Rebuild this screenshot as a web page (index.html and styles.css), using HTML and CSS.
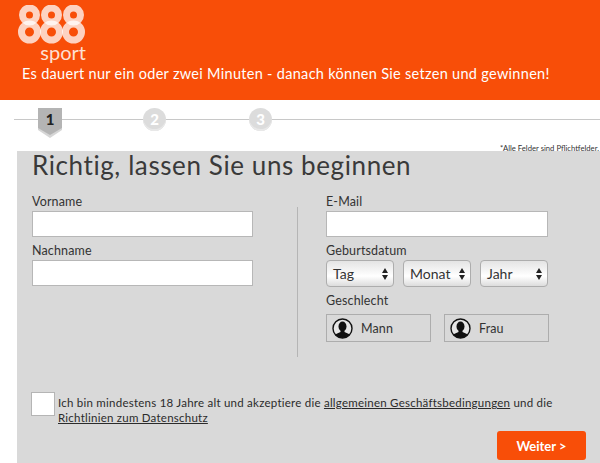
FILE: index.html
```html
<!DOCTYPE html>
<html lang="de">
<head>
<meta charset="utf-8">
<title>888sport</title>
<link rel="stylesheet" href="styles.css">
</head>
<body>
<header class="hero">
  <div class="logo">
    <svg class="logo-mark" width="68" height="39" viewBox="0 0 68 39" fill="none" stroke="#fff" stroke-opacity=".75" stroke-width="7">
      <circle cx="11.5" cy="10" r="7"/><circle cx="11.5" cy="27" r="8"/>
      <circle cx="33.5" cy="10" r="7"/><circle cx="33.5" cy="27" r="8"/>
      <circle cx="55.5" cy="10" r="7"/><circle cx="55.5" cy="27" r="8"/>
    </svg>
    <span class="logo-word">sport</span>
  </div>
  <p class="tagline">Es dauert nur ein oder zwei Minuten - danach können Sie setzen und gewinnen!</p>
</header>
<nav class="steps">
  <div class="step-active">
    <svg width="24" height="30" viewBox="0 0 24 30"><path d="M0 0H24V22L12 30L0 22Z" fill="#d6d6d6"/><path d="M0 0H24V20L12 27L0 20Z" fill="#b4b4b4"/></svg>
    <span class="step-num">1</span>
  </div>
  <span class="step-circle step-two">2</span>
  <span class="step-circle step-three">3</span>
</nav>
<p class="note">*Alle Felder sind Pflichtfelder.</p>
<main class="panel">
  <h1 class="title">Richtig, lassen Sie uns beginnen</h1>
  <div class="columns">
    <div class="col-left">
      <label class="label">Vorname</label>
      <input class="field" type="text">
      <label class="label label-next">Nachname</label>
      <input class="field" type="text">
    </div>
    <div class="divider"></div>
    <div class="col-right">
      <label class="label">E-Mail</label>
      <input class="field" type="text">
      <label class="label label-next">Geburtsdatum</label>
      <div class="selects">
        <div class="select">Tag<svg class="updown" width="6" height="12" viewBox="0 0 6 12"><path d="M3 0L6 5H0ZM3 12L0 7H6Z" fill="#222"/></svg></div>
        <div class="select">Monat<svg class="updown" width="6" height="12" viewBox="0 0 6 12"><path d="M3 0L6 5H0ZM3 12L0 7H6Z" fill="#222"/></svg></div>
        <div class="select">Jahr<svg class="updown" width="6" height="12" viewBox="0 0 6 12"><path d="M3 0L6 5H0ZM3 12L0 7H6Z" fill="#222"/></svg></div>
      </div>
      <label class="label label-gender">Geschlecht</label>
      <div class="genders">
        <div class="gender">
          <svg width="21" height="21" viewBox="0 0 21 21"><defs><clipPath id="c1"><circle cx="10.5" cy="10.5" r="9.5"/></clipPath></defs><circle cx="10.5" cy="10.5" r="9.5" fill="#e6e6e6"/><g clip-path="url(#c1)" fill="#111"><ellipse cx="10.5" cy="8.5" rx="4" ry="5"/><path d="M8.5 12.5H12.5V14L18 16.5V21H3V16.5L8.5 14Z"/></g><circle cx="10.5" cy="10.5" r="9.5" fill="none" stroke="#111" stroke-width="1.4"/></svg>
          <span>Mann</span>
        </div>
        <div class="gender">
          <svg width="21" height="21" viewBox="0 0 21 21"><defs><clipPath id="c2"><circle cx="10.5" cy="10.5" r="9.5"/></clipPath></defs><circle cx="10.5" cy="10.5" r="9.5" fill="#e6e6e6"/><g clip-path="url(#c2)" fill="#111"><ellipse cx="10.5" cy="8.5" rx="4" ry="5"/><path d="M8.5 12.5H12.5V14L18 16.5V21H3V16.5L8.5 14Z"/></g><circle cx="10.5" cy="10.5" r="9.5" fill="none" stroke="#111" stroke-width="1.4"/></svg>
          <span>Frau</span>
        </div>
      </div>
    </div>
  </div>
  <div class="terms">
    <span class="checkbox"></span>
    <p class="terms-text">Ich bin mindestens 18 Jahre alt und akzeptiere die <a href="#">allgemeinen Geschäftsbedingungen</a> und die <a href="#">Richtlinien zum Datenschutz</a></p>
  </div>
  <div class="actions"><button class="next" type="button">Weiter &gt;</button></div>
</main>
</body>
</html>
```
FILE: styles.css
```css
* { box-sizing: border-box; }
html, body { margin: 0; padding: 0; }
body {
  width: 600px;
  height: 463px;
  overflow: hidden;
  background: #fff;
  font-family: Lato, "Liberation Sans", sans-serif;
  color: #2b2b2b;
}
.hero {
  height: 100px;
  background: #f84e08;
  color: #fff;
  padding: 5px 0 0 18px;
}
.logo { width: 68px; display: flex; flex-direction: column; align-items: flex-end; }
.logo-mark { display: block; }
.logo-word { font-size: 20px; font-weight: 400; line-height: 17px; color: #fde0d2; }
.tagline { margin: 3px 0 0 4px; font-size: 14.5px; line-height: 20px; letter-spacing: .3px; white-space: nowrap; }
.steps {
  position: relative;
  height: 38px;
  margin: 8px 0 0 14px;
  background: linear-gradient(#c8c8c8, #c8c8c8) 0 11px / 100% 1px no-repeat;
  display: flex;
  align-items: flex-start;
}
.step-active { position: relative; width: 24px; height: 30px; margin-left: 24px; }
.step-active svg { display: block; }
.step-num { position: absolute; left: 0; right: 0; top: 1px; text-align: center; font-size: 15px; font-weight: 900; line-height: 20px; color: #222; }
.step-circle {
  width: 23px; height: 23px; border-radius: 50%;
  background: #dcdcdc; color: #fff;
  box-shadow: inset 0 -2px 0 #e8e8e8;
  font-size: 15px; font-weight: 900; line-height: 23px; text-align: center;
}
.step-two { margin-left: 81px; }
.step-three { margin-left: 83px; }
.note { margin: -2px 1px 0 0; font-size: 7.7px; line-height: 8px; text-align: right; color: #333; }
.panel {
  margin: -1px 0 0 17px;
  height: 312px;
  background: #d9d9d9;
  padding: 0 0 0 15px;
}
.title { margin: 0; font-size: 26px; font-weight: 400; line-height: 28px; letter-spacing: .6px; color: #3a3a3a; }
.columns { display: flex; margin-top: 15px; height: 158px; }
.col-left { width: 221px; }
.divider { width: 1px; height: 150px; margin: 13px 0 0 44px; background: #b5b5b5; }
.col-right { margin-left: 28px; width: 223px; }
.label { display: block; font-size: 12.5px; line-height: 16px; letter-spacing: .15px; color: #333; height: 16px; }
.label-next { margin-top: 6px; }
.label-gender { margin-top: 6px; }
.field {
  display: block;
  width: 100%;
  height: 26px;
  margin: 1px 0 0;
  border: 1px solid #b7b7b7;
  background: #fff;
  padding: 0;
}
.col-right .field { width: 222px; }
.selects { display: flex; gap: 9px; margin-top: 1px; width: 222px; }
.select {
  flex: 1;
  height: 27px;
  border: 1px solid #adadad;
  border-radius: 4px;
  background: linear-gradient(#e4e4e4, #f8f8f8 45%, #ffffff 60%, #dcdcdc);
  padding: 0 5px 0 6px;
  display: flex;
  align-items: center;
  justify-content: space-between;
  font-size: 14px;
  color: #333;
}
.genders { display: flex; gap: 13px; margin-top: 5px; }
.gender {
  width: 105px;
  height: 28px;
  border: 1px solid #adadad;
  display: flex;
  align-items: center;
  gap: 8px;
  padding-left: 5px;
  font-size: 12.5px;
  letter-spacing: .1px;
  color: #333;
}
.terms { display: flex; margin: 40px 0 0 -1px; align-items: flex-start; gap: 3px; }
.checkbox { width: 24px; height: 24px; flex: none; background: #fff; border: 1px solid #b5b5b5; }
.terms-text { margin: 3px 0 0; width: 510px; font-size: 11.5px; line-height: 15px; letter-spacing: .24px; color: #2b2b2b; }
.terms-text a { color: #2b2b2b; text-decoration: underline; }
.actions { display: flex; justify-content: flex-end; margin: 0 14px 0 0; }
.next {
  width: 89px; height: 29px;
  margin-top: 6px;
  border: 0; border-radius: 3px;
  background: #f84e08; color: #fff;
  font: 700 13px Lato, "Liberation Sans", sans-serif;
}
```
